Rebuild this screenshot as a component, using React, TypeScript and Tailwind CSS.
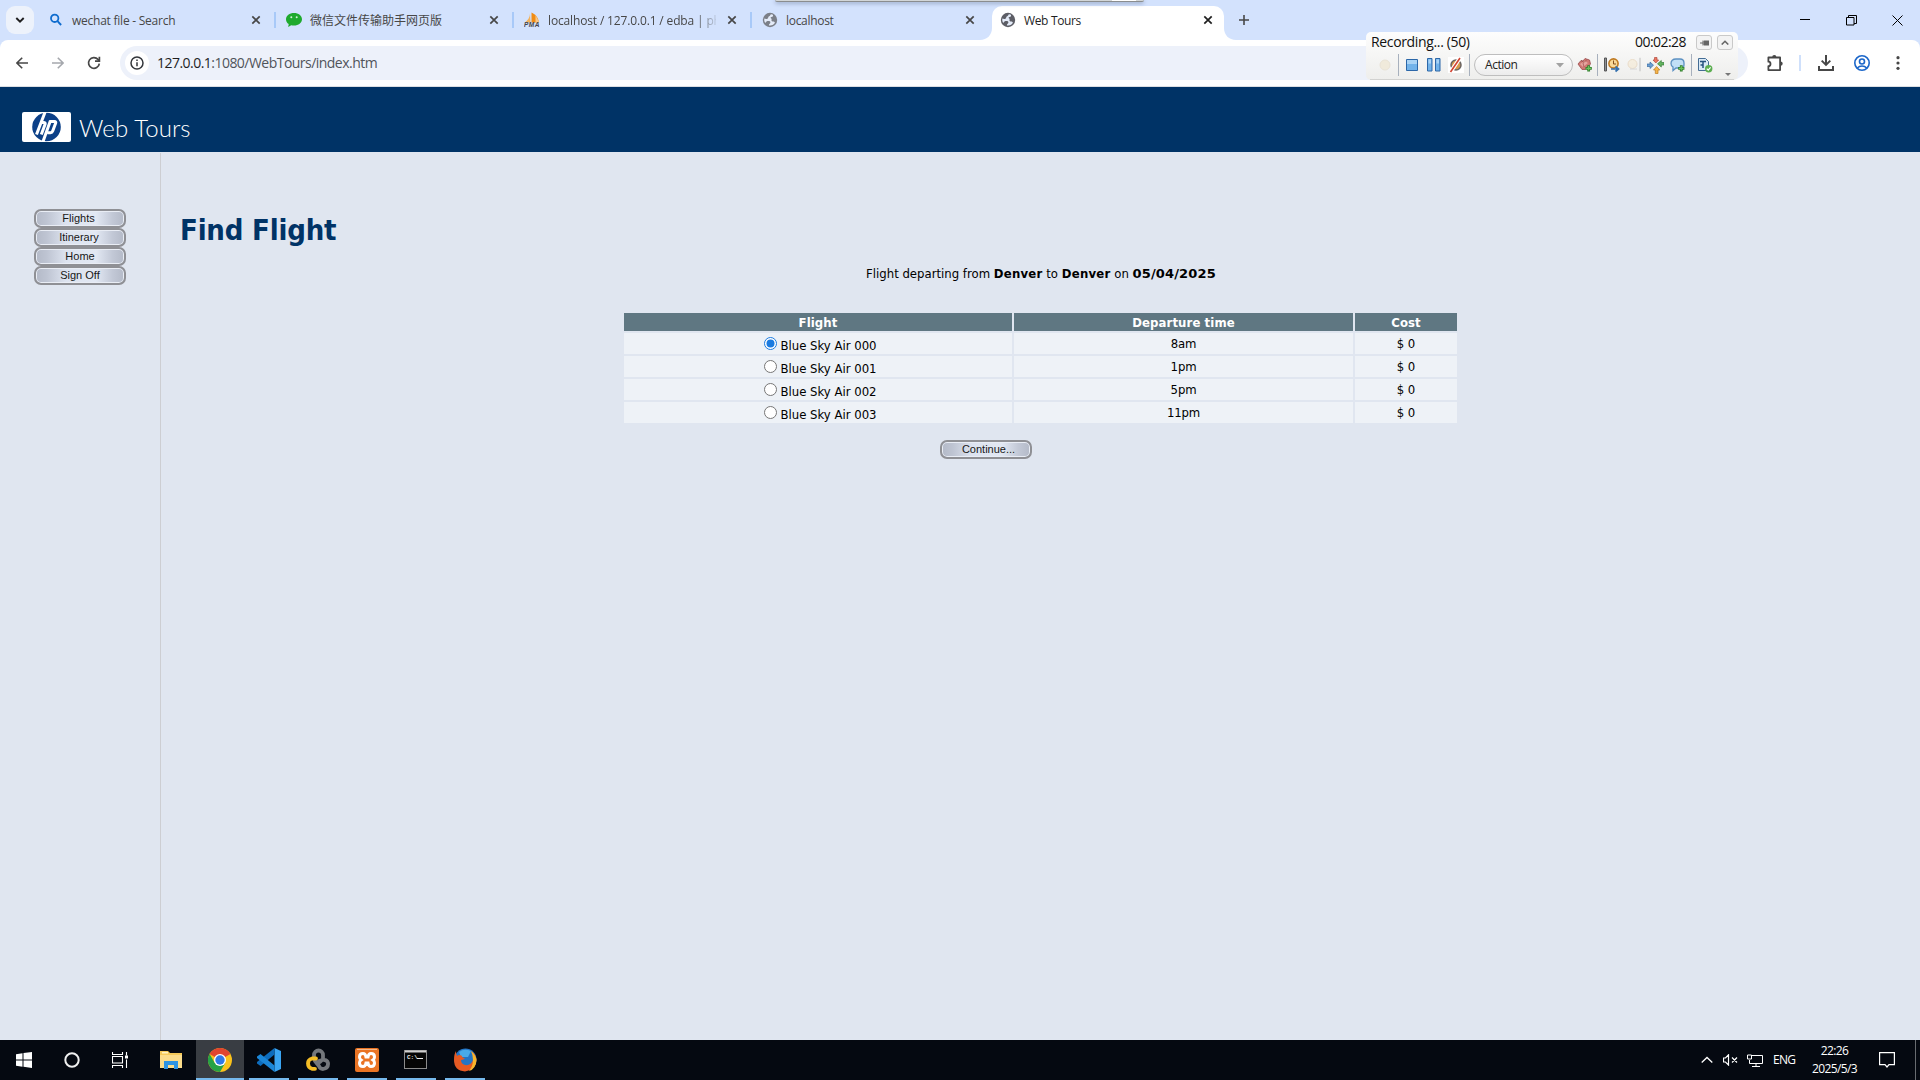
import React from "react";

const ui = "font-['Open_Sans','Noto_Sans_CJK_SC',sans-serif]";

function Close({ className = "text-[#474747]" }: { className?: string }) {
  return (
    <svg width="10" height="10" viewBox="0 0 10 10" className={`shrink-0 ${className}`}>
      <path d="M1.3 1.3 8.7 8.7M8.7 1.3 1.3 8.7" stroke="currentColor" strokeWidth="1.7" fill="none" />
    </svg>
  );
}

function Globe({ color }: { color: string }) {
  return (
    <svg width="16" height="16" viewBox="0 0 16 16">
      <circle cx="8" cy="8" r="7.2" fill={color} />
      <path
        d="M9.4 2.2C7.8 2.4 8.6 3.8 7.2 4.3 5.8 4.8 6.6 6.2 5.4 6.7 4.4 7.1 3.2 6.9 2.4 6.6 2 8.2 2.3 9.6 3.1 10.8 4.4 10.7 4.2 9.2 5.6 9.1 7.2 9 8.5 9.3 8.4 10.6 8.3 11.8 7 11.6 6.9 13.4 9.4 13.9 12 12.8 13 10.6 12.4 9.9 12 9.3 10.8 9.4 9.4 9.5 9.3 8.2 9.6 7.4 10 6.4 8.6 6.7 8.6 5.7 8.6 4.8 10.2 5 10.8 4.4 11.2 3.9 11 3.3 10.9 2.8 10.4 2.4 9.9 2.2 9.4 2.2Z"
        fill="#e4ebf8"
      />
    </svg>
  );
}

function SearchFavicon() {
  return (
    <svg width="16" height="16" viewBox="0 0 16 16">
      <circle cx="6.7" cy="6.3" r="3.7" stroke="#0f6cce" strokeWidth="1.8" fill="none" />
      <path d="M9.5 9.2 13.1 13" stroke="#0f6cce" strokeWidth="1.9" />
    </svg>
  );
}

function WechatFavicon() {
  return (
    <svg width="16" height="16" viewBox="0 0 16 16">
      <path d="M8 1C3.5 1 0 3.6 0 7.2c0 2 1 3.7 2.7 4.9L2.2 15l3-1.7c.9.2 1.800.3 2.800.3 4.5 0 8-2.7 8-6.3S12.5 1 8 1Z" fill="#1faa2e" />
      <circle cx="5.3" cy="5.2" r="1" fill="#d5f3d8" />
      <circle cx="10.7" cy="5.2" r="1" fill="#d5f3d8" />
    </svg>
  );
}

function PmaFavicon() {
  return (
    <svg width="16" height="16" viewBox="0 0 16 16">
      <path d="M6 1.5C6 5 4 8 1 10.5h5.5Z" fill="#f2b25c" />
      <path d="M7.5.5v10H15C14 5 11 2 7.5.5Z" fill="#f08c14" />
      <path d="M11.5 3v7.5h3.8Z" fill="#f7c88a" />
      <text x="0" y="15" fontSize="6.5" fontWeight="bold" fontStyle="italic" fill="#44444a" fontFamily="Liberation Sans, sans-serif" textLength="15.5">PMA</text>
    </svg>
  );
}

type TabProps = { icon: React.ReactNode; title: string; tracking?: string; separator?: boolean; fade?: boolean };

function Tab({ icon, title, tracking = "tracking-[-0.2px]", separator = true, fade = false }: TabProps) {
  return (
    <div className="flex h-10 w-[238px] shrink-0 items-center pl-[10px]">
      <div className="flex w-4 shrink-0 justify-center">{icon}</div>
      <div
        className={`ml-2 mt-[2px] w-[168px] whitespace-nowrap text-[12px] leading-5 text-[#474747] ${tracking} ${
          fade ? "[mask-image:linear-gradient(to_right,black_88%,transparent_102%)]" : ""
        }`}
      >
        {title}
      </div>
      <div className="ml-[11px]">
        <Close />
      </div>
      <div className={`ml-auto h-4 w-[2px] ${separator ? "bg-[#a8c9f8]" : ""}`} />
    </div>
  );
}

function TabStrip() {
  return (
    <div className="flex h-10 shrink-0 items-center bg-[#d3e2fd]">
      <div className="ml-[6px] mr-1 flex size-7 shrink-0 items-center justify-center rounded-[9px] bg-[#edf2fb]">
        <svg width="10" height="8" viewBox="0 0 10 8">
          <path d="M1.3 2 5 5.7 8.7 2" stroke="#1f1f1f" strokeWidth="1.9" fill="none" />
        </svg>
      </div>
      <Tab icon={<SearchFavicon />} title="wechat file - Search" tracking="tracking-[-0.24px]" />
      <Tab icon={<WechatFavicon />} title="微信文件传输助手网页版" tracking="tracking-[0px]" />
      <Tab icon={<PmaFavicon />} title="localhost / 127.0.0.1 / edba | ph" tracking="tracking-[-0.15px]" fade />
      <Tab icon={<Globe color="#7b7f88" />} title="localhost" tracking="tracking-[-0.3px]" separator={false} />
      <div className="flex h-10 w-[246px] shrink-0 items-end">
        <svg width="12" height="12" viewBox="0 0 12 12" className="-ml-[10px] shrink-0">
          <path d="M12 0v12H0C7 12 12 7 12 0Z" fill="white" />
        </svg>
        <div className="flex h-[34px] w-[232px] shrink-0 items-center rounded-t-[10px] bg-white pb-[6px] pl-2">
          <Globe color="#5d5e66" />
          <div className="ml-2 mt-[2px] w-[168px] text-[12px] leading-5 tracking-[-0.35px] text-[#1f1f1f]">Web Tours</div>
          <div className="ml-[11px]">
            <Close className="text-[#1f1f1f]" />
          </div>
        </div>
        <svg width="12" height="12" viewBox="0 0 12 12" className="shrink-0">
          <path d="M0 0v12H12C5 12 0 7 0 0Z" fill="white" />
        </svg>
      </div>
      <svg width="12" height="12" viewBox="0 0 12 12" className="ml-[2px]">
        <path d="M6 1v10M1 6h10" stroke="#474747" strokeWidth="1.6" />
      </svg>
      <div className="ml-auto flex items-center gap-9 pr-[17px] text-black">
        <svg width="10" height="12" viewBox="0 0 10 12"><path d="M0 5.5h10" stroke="currentColor" /></svg>
        <svg width="11" height="11" viewBox="0 0 11 11" fill="none" stroke="currentColor">
          <path d="M.5 2.5h7.5v7.5H.5ZM2.5 2.5V.5h8v8H8" />
        </svg>
        <svg width="11" height="11" viewBox="0 0 11 11" className="-ml-px"><path d="m.5.5 10 10m0-10-10 10" stroke="currentColor" /></svg>
      </div>
    </div>
  );
}

function AddressBar() {
  return (
    <div className="flex h-[47px] shrink-0 items-center bg-[#d3e2fd]">
      <div className="flex h-[47px] w-full items-center rounded-t-[8px] border-b border-[#dcdfe3] bg-white pb-[1px] pl-[16px] pr-[17px]">
        <svg width="12" height="12" viewBox="0 0 12 12" fill="none" stroke="#474747" strokeWidth="1.6">
          <path d="M12 6H1M6.2.7.9 6l5.3 5.3" />
        </svg>
        <svg width="12" height="12" viewBox="0 0 12 12" fill="none" stroke="#a5a8ad" strokeWidth="1.6" className="ml-6">
          <path d="M0 6h11M5.8.7 11.1 6l-5.3 5.3" />
        </svg>
        <svg width="14" height="14" viewBox="0 0 14 14" fill="none" stroke="#474747" strokeWidth="1.7" className="ml-[23px]">
          <path d="M12.3 7.6A5.4 5.4 0 1 1 11 3.4l1.3 1.4" />
          <path d="M12.4.7v4.5H8" />
        </svg>
        <div className="ml-[19px] flex h-[34px] w-[1628px] shrink-0 items-center rounded-full bg-[#edf1fa] pl-[5px]">
          <div className="flex size-6 shrink-0 items-center justify-center rounded-full bg-white">
            <svg width="14" height="14" viewBox="0 0 14 14" fill="none" stroke="#33363b" strokeWidth="1.5">
              <circle cx="7" cy="7" r="6" />
              <path d="M7 6.2V10.2M7 3.6v1.5" />
            </svg>
          </div>
          <div className="ml-[8px] whitespace-nowrap text-[14px] leading-5 tracking-[-0.53px] text-[#50545a]">
            <span className="text-[#1f1f1f]">127.0.0.1</span>:1080/WebTours/index.htm
          </div>
        </div>
        <svg width="18" height="18" viewBox="0 0 18 18" fill="none" stroke="#474747" strokeWidth="1.8" strokeLinejoin="round" className="ml-[18px] shrink-0">
          <path d="M2.4 3.5h11.7v12.6H2.4v-4c1.3 0 2.1-.9 2.1-2.2 0-1.3-.8-2.2-2.1-2.2Z" />
          <path d="M6.2 3.2a2.1 2.1 0 0 1 4.2 0ZM14.5 7.4a2.1 2.1 0 0 1 0 4.4Z" fill="#474747" stroke="none" />
        </svg>
        <div className="ml-[15px] h-4 w-[2px] shrink-0 bg-[#cfe0fb]" />
        <svg width="16" height="16" viewBox="0 0 16 16" fill="none" stroke="#474747" strokeWidth="2" className="ml-[17px] shrink-0">
          <path d="M8 0v9.5M3.7 5.6 8 9.9l4.3-4.3M1 11v4h14v-4" />
        </svg>
        <svg width="16" height="16" viewBox="0 0 16 16" fill="none" stroke="#1b66c9" strokeWidth="1.6" className="ml-5 shrink-0">
          <circle cx="8" cy="8" r="7.2" />
          <circle cx="8" cy="6.5" r="2.5" />
          <path d="M3.3 13c2.5-2.6 6.9-2.6 9.4 0" />
        </svg>
        <svg width="4" height="14" viewBox="0 0 4 14" fill="#474747" className="ml-auto mr-[3px] shrink-0">
          <circle cx="2" cy="1.7" r="1.6" /><circle cx="2" cy="7" r="1.6" /><circle cx="2" cy="12.3" r="1.6" />
        </svg>
      </div>
    </div>
  );
}

function Plus({ x, y }: { x: number; y: number }) {
  return (
    <g>
      <path d={`M${x} ${y - 4}v8M${x - 4} ${y}h8`} stroke="#2f7d2b" strokeWidth="3.6" />
      <path d={`M${x} ${y - 3}v6M${x - 3} ${y}h6`} stroke="#6cc35c" strokeWidth="1.6" />
    </g>
  );
}

function Divider({ className }: { className: string }) {
  return <div className={`h-[22px] w-px shrink-0 bg-[#a7b0bd] ${className}`} />;
}

/* Floating recorder toolbar that hovers over the browser window. */
function Recorder() {
  return (
    <div className="absolute left-[1366px] top-[32px] h-12 w-[372px] rounded-[5px] bg-linear-to-b from-[#fdfdfd] to-[#eeeeec]">
      <div className="flex h-[19px] items-center pl-[5px] pr-[5px] text-[14px] text-[#111]">
        <span className="tracking-[-0.35px]">Recording... (50)</span>
        <span className="ml-auto tracking-[-0.55px]">00:02:28</span>
        <div className="ml-[10px] mt-[2px] flex h-[15px] w-4 items-center justify-center rounded-[3px] border border-[#c9c9c9] bg-[#f3f3f3]">
          <svg width="9" height="6" viewBox="0 0 9 6"><path d="M0 3h3M3 .5v5M4 1h5v4H4Z" fill="#666" stroke="#666" /></svg>
        </div>
        <div className="ml-[5px] mt-[2px] flex h-[15px] w-4 items-center justify-center rounded-[3px] border border-[#c9c9c9] bg-[#f3f3f3]">
          <svg width="8" height="5" viewBox="0 0 8 5"><path d="M.7 4.5 4 1.3l3.3 3.2" fill="none" stroke="#666" strokeWidth="1.6" /></svg>
        </div>
      </div>
      <div className="ml-1 flex h-[29px] w-[364px] items-center border-b border-[#d2d2d0] pb-px pt-px">
        <svg width="14" height="14" viewBox="0 0 14 14" className="ml-2"><circle cx="7" cy="7" r="5" fill="#f0eadb" stroke="#e9e3d6" /></svg>
        <Divider className="ml-[6px]" />
        <svg width="12" height="12" viewBox="0 0 12 12" className="ml-[7px]">
          <path d="M.5.5h11v11H.5Z" fill="#72b3ea" stroke="#2c67a8" /><path d="M1 1h10v4H1Z" fill="#a9d3f5" />
        </svg>
        <svg width="14" height="14" viewBox="0 0 14 14" className="ml-[9px]" fill="#72b3ea" stroke="#2c67a8">
          <path d="M.5.5h4.5v12.5H.5ZM8.5.5h4.5v12.5H8.5Z" /><path d="M1.5 1.5h2.5v4H1.5ZM9.5 1.5h2.5v4H9.5Z" fill="#a9d3f5" stroke="none" />
        </svg>
        <svg width="16" height="16" viewBox="0 0 16 16" className="ml-[7px]">
          <rect width="16" height="16" fill="#fff" />
          <circle cx="8" cy="8" r="5" fill="#d7984a" stroke="#6a6461" strokeWidth="1.5" />
          <path d="m2.5 15 9.5-14" stroke="#fff" strokeWidth="4" /><path d="m2.5 15 9.5-14" stroke="#d2412e" strokeWidth="1.6" />
        </svg>
        <Divider className="ml-[5px]" />
        <div className="ml-[4px] flex h-[22px] w-[99px] shrink-0 items-center rounded-full border border-[#bebebe] bg-linear-to-b from-white to-[#ececec] pl-[10px] pr-2 text-[12px] text-[#222]">
          <span className="tracking-[-0.45px]">Action</span>
          <svg width="8" height="5" viewBox="0 0 8 5" className="ml-auto"><path d="M0 0h8L4 4.5Z" fill="#a2a2a2" /></svg>
        </div>
        <svg width="16" height="16" viewBox="0 0 16 16" className="ml-[4px] shrink-0">
          <path d="m1 7 3-3.5 2 .5 2-2.5 4.5 1.5 1 4-5 5.5L5 12.5Z" fill="#cf7773" stroke="#994d4c" strokeWidth=".8" /><path d="m3 7 5-3 3 2-5 4Z" fill="#e6a49e" /><path d="m4 3.5 3 2 3-3M6 6l1 4" stroke="#994d4c" strokeWidth=".7" fill="none" />
          <g transform="translate(2.7 2.7) scale(.78)"><Plus x={11.5} y={11} /></g>
        </svg>
        <Divider className="ml-[4px]" />
        <svg width="16" height="16" viewBox="0 0 16 16" className="ml-[6px] shrink-0">
          <path d="M.5 1h2v13h-2Z" fill="#8d9095" stroke="#555" /><circle cx="9.5" cy="6.5" r="4.6" fill="#f9d998" stroke="#bf7a21" strokeWidth="1.6" />
          <path d="M9.5 3.5v3.5h2.5" stroke="#814e1d" fill="none" /><path d="M7 12h7m-2.5-2.5 3 2.5-3 2.5" stroke="#3470ae" strokeWidth="1.7" fill="none" />
        </svg>
        <svg width="16" height="16" viewBox="0 0 16 16" className="ml-[6px] shrink-0 opacity-20">
          <circle cx="6.5" cy="7" r="4.5" fill="#f9d998" stroke="#bf7a21" /><path d="M4 12h7M13.5 1h1v13h-1Z" stroke="#777" fill="none" />
        </svg>
        <svg width="17" height="17" viewBox="0 0 17 17" className="ml-[5px] shrink-0">
          <path d="M0 7h3V5L6.5 8.2 3 11.5V9.5H0Z" fill="#6a9fd4" stroke="#3c6da1" strokeWidth=".7" />
          <path d="M7.5.5h2.5v2.5h1.7L8.8 6 6 3h1.5Z" fill="#ec7561" stroke="#b04c3d" strokeWidth=".7" />
          <path d="M17 5.5h-2.7V3.5L10.5 6.8l3.8 3.2V8H17Z" fill="#62b45f" stroke="#397d39" strokeWidth=".7" />
          <path d="M8.3 16.5h2.7V13h1.8L9.6 9.5 6.5 13h1.8Z" fill="#f6b44a" stroke="#bf7c1b" strokeWidth=".7" />
        </svg>
        <svg width="16" height="16" viewBox="0 0 16 16" className="ml-[6px] shrink-0">
          <path d="M6 2h4q4 0 4 4v2q0 3-3 3H6l-3 2.5V10Q1 9 1 6.5 1 2 6 2Z" fill="#c1dff6" stroke="#5c91c2" strokeWidth="1.3" />
          <g transform="translate(2.7 2.7) scale(.78)"><Plus x={11} y={11} /></g>
        </svg>
        <Divider className="ml-[5px]" />
        <svg width="16" height="16" viewBox="0 0 16 16" className="ml-[5px] shrink-0">
          <path d="M1.5 1.5h7l3 3v9h-10Z" fill="#d9e9f6" stroke="#446d95" /><path d="M3 4.5h6M6 4.5v6.5M3.5 8h2" stroke="#25517e" strokeWidth="1.5" />
          <circle cx="11.7" cy="11.7" r="3.7" fill="#5cae50" /><path d="m9.8 11.7 1.4 1.4 2.4-2.8" stroke="#fff" fill="none" strokeWidth="1.2" />
        </svg>
        <svg width="6" height="4" viewBox="0 0 6 4" className="ml-[12px] mt-[20px] shrink-0"><path d="M0 0h6L3 3Z" fill="#777" /></svg>
      </div>
    </div>
  );
}

function PillButton({ label, className }: { label: string; className: string }) {
  return (
    <button
      type="button"
      className="block h-[19px] w-[92px] shrink-0 rounded-[7px] border-2 border-[#8f9095] bg-[linear-gradient(to_right,#b4bac8,#bec4d2_12%,#dde3ef_34%,#e2e8f3_68%,#c2c8d6_87%,#b4bac8)] text-center font-['Liberation_Sans',Arial,sans-serif] text-[11px] leading-[13px] text-[#171717] shadow-[inset_0_0_0_1px_#e9edf5]"
    >
      <span className={`block ${className}`}>{label}</span>
    </button>
  );
}

const flights = [
  { name: "Blue Sky Air 000", time: "8am" },
  { name: "Blue Sky Air 001", time: "1pm" },
  { name: "Blue Sky Air 002", time: "5pm" },
  { name: "Blue Sky Air 003", time: "11pm" },
];

function Radio({ checked }: { checked: boolean }) {
  return (
    <svg width="13" height="13" viewBox="0 0 13 13" className="mr-[3px] shrink-0">
      <circle cx="6.5" cy="6.5" r="6" fill="#fff" stroke={checked ? "#1a7be0" : "#767676"} />
      {checked && <circle cx="6.5" cy="6.5" r="4" fill="#1a7be0" />}
    </svg>
  );
}

function FindFlight() {
  return (
    <main className="flex-1 pl-[19px] font-['DejaVu_Sans_Condensed','DejaVu_Sans',sans-serif] text-[13px] text-black">
      <h1 className="mt-[59px] whitespace-nowrap text-[29px] font-bold leading-[38px] tracking-[-0.2px] text-[#003366]">Find Flight</h1>
      <div className="ml-[444px] mt-[15px] flex w-[833px] flex-col items-center">
        <p className="whitespace-nowrap pl-px leading-[20px]">
          Flight departing from <b className="tracking-[0.25px]">Denver</b> to <b className="tracking-[0.25px]">Denver</b> on{" "}
          <b className="font-['DejaVu_Sans',sans-serif] tracking-[0.15px]">05/04/2025</b>
        </p>
        <div className="mt-[29px] grid grid-cols-[388px_339px_102px] gap-[2px] text-center">
          {["Flight", "Departure time", "Cost"].map((label) => (
            <div key={label} className="h-[18px] bg-[#5f7782] font-bold leading-[19px] text-white tracking-[0.1px]">{label}</div>
          ))}
          {flights.map(({ name, time }, i) => (
            <React.Fragment key={name}>
              <div className="flex h-[21px] items-start justify-center bg-[#eef2f7] pt-1 pl-[5px]">
                <Radio checked={i === 0} />
                <span className="mt-[1px] leading-[16px]">{name}</span>
              </div>
              <div className="h-[21px] bg-[#eef2f7] leading-[22px] tracking-[-0.15px]">{time}</div>
              <div className="h-[21px] bg-[#eef2f7] leading-[22px]">$ 0</div>
            </React.Fragment>
          ))}
        </div>
        <div className="mr-[110px] mt-[17px]">
          <PillButton label="Continue..." className="pl-[6px]" />
        </div>
      </div>
    </main>
  );
}

function SiteHeader() {
  return (
    <header className="flex h-[65px] shrink-0 bg-[#003366] pl-[22px] pt-[25px]">
      <svg width="49" height="30" viewBox="0 0 49 30" className="shrink-0">
        <rect width="49" height="30" rx="2" fill="#fff" />
        <circle cx="24.5" cy="15" r="14.3" fill="#0c4088" />
        <g fill="none" stroke="#fff" strokeWidth="3">
          <path d="M23.5-1 14.5 22.5M18.5 10.5h3q2.2 0 1.5 2L19.3 22.5" />
          <path d="M28.5 8.5 20.5 31M28 9.5h4.5q1.7 0 1.1 1.8l-2.9 7.8q-.6 1.6-2.2 1.6H25.5" />
        </g>
      </svg>
      <div className="ml-[8px] whitespace-nowrap font-['Lato',sans-serif] text-[24px] font-light leading-[32px] tracking-[0.1px] text-white">Web Tours</div>
    </header>
  );
}

function TaskIcon({ children, state = "idle" }: { children: React.ReactNode; state?: "idle" | "open" | "active" }) {
  return (
    <div className={`flex h-10 shrink-0 items-center justify-center ${state === "active" ? "w-12 bg-[#393d43]" : "mx-[4px] w-10"} ${state === "idle" ? "" : "border-b-2 border-[#76b9ed] pt-[2px]"}`}>
      {children}
    </div>
  );
}

function Taskbar() {
  return (
    <footer className="flex h-10 shrink-0 items-center bg-[#050911] text-white">
      <TaskIcon>
        <svg width="16" height="16" viewBox="0 0 16 16" fill="#fff"><path d="M0 2.2 6.5 1.3V7.5H0ZM7.5 1.1 16 0v7.5H7.5ZM0 8.5h6.5v6.2L0 13.8ZM7.5 8.5H16V16l-8.5-1.2Z" /></svg>
      </TaskIcon>
      <TaskIcon>
        <svg width="16" height="16" viewBox="0 0 16 16"><circle cx="8" cy="8" r="6.7" fill="none" stroke="#f0f0f0" strokeWidth="2" /></svg>
      </TaskIcon>
      <TaskIcon>
        <svg width="16" height="16" viewBox="0 0 16 16" fill="none" stroke="#fff" strokeWidth="1.1"><path d="M.5 0v2.5h10V0M.5 4.5h10v6.5H.5ZM.5 16v-2.5h10V16M14.5 0v3.5M14.5 7.5V16" /><path d="M13 3.5h3v3h-3Z" fill="#fff" stroke="none" /></svg>
      </TaskIcon>
      <div className="w-[3px]" />
      <TaskIcon>
        <svg width="22" height="20" viewBox="0 0 22 20"><path d="M0 1h8l2 2h12v15H0Z" fill="#f5c95a" /><path d="M2 2h6v1.5H2Z" fill="#fff2c0" /><path d="M0 5h22v13H0Z" fill="#fbdc8b" /><path d="M4 11h14v8h-4v-4H8v4H4Z" fill="#2e93e2" /></svg>
      </TaskIcon>
      <div className="w-px" />
      <TaskIcon state="active">
        <svg width="24" height="24" viewBox="0 0 24 24">
          <circle cx="12" cy="12" r="12" fill="#fbc21b" />
          <path d="M12 12 1.6 6a12 12 0 0 1 20.8 0Z" fill="#e0452f" />
          <path d="M1.6 6A12 12 0 0 0 12 24l5.2-9L12 12 6.8 15Z" fill="#26a245" />
          <circle cx="12" cy="12" r="6" fill="#fff" /><circle cx="12" cy="12" r="4.7" fill="#3079e5" />
        </svg>
      </TaskIcon>
      <div className="w-px" />
      <TaskIcon state="open">
        <svg width="24" height="24" viewBox="0 0 24 24">
          <path d="M17.5 0v24L24 21V3Z" fill="#3aa5f3" />
          <path d="M17.5 0v6.5L3.5 18 0 15.5V14Z" fill="#0d6cbd" />
          <path d="M17.5 24v-6.5L3.5 6 0 8.5V10Z" fill="#1b86d8" />
        </svg>
      </TaskIcon>
      <div className="w-px" />
      <TaskIcon state="open">
        <svg width="24" height="24" viewBox="0 0 24 24" fill="none" strokeWidth="3.8" strokeLinecap="round">
          <path d="M8 8.5V7a4.5 4.5 0 0 1 9 0v4l-3 3M13 13l3-1q5-1 6 3 .5 5-5 6-3 0-4-3L9 13" stroke="#74777c" />
          <path d="M10 10.5H6q-4 1-4 5 0 4 4 5.3H9" stroke="#f5bd26" />
        </svg>
      </TaskIcon>
      <div className="w-px" />
      <TaskIcon state="open">
        <svg width="24" height="24" viewBox="0 0 24 24">
          <rect width="24" height="24" rx="2" fill="#ea7424" /><path d="M2 1.5h20" stroke="#f5b88a" />
          <path d="M8 5.5q2.5 0 3 3.5h2q.5-3.5 3-3.5 3.5 0 3.5 3.5 0 2-1.5 3 1.5 1 1.5 3 0 3.5-3.5 3.5-2.5 0-3-3.5h-2q-.5 3.5-3 3.5-3.5 0-3.5-3.5 0-2 1.5-3-1.5-1-1.5-3 0-3.5 3.5-3.5Z" fill="none" stroke="#fff" strokeWidth="3" />
        </svg>
      </TaskIcon>
      <div className="w-px" />
      <TaskIcon state="open">
        <svg width="24" height="20" viewBox="0 0 24 20">
          <rect x=".5" y=".5" width="22" height="18" fill="#050505" stroke="#8b8b8b" /><path d="M1 1.5h21" stroke="#d0d0d0" strokeWidth="2" />
          <text x="3" y="9" fill="#eee" fontSize="6" fontWeight="bold" fontFamily="Liberation Mono, monospace">C:\</text><path d="M13 8.5h6" stroke="#eee" />
        </svg>
      </TaskIcon>
      <div className="w-px" />
      <TaskIcon state="open">
        <svg width="24" height="24" viewBox="0 0 24 24">
          <circle cx="12.5" cy="11.5" r="11" fill="#2475c5" /><path d="M6 4q5-4 12-1l-3 6H8Z" fill="#48aae9" />
          <path d="M3 3q0 3 1 5 2-2 5 0 0 2 3 2-1 2-4 2 0 4 4 5 6 1 8-5 1-5-2-9 5 3 5.5 9Q23 22 12 23.5 1 22.5 1 12 1 6 3 3Z" fill="#e65a23" />
          <path d="M18 3q5 4 5.5 9-.5 9-7.5 11 4-5 4-11 0-5-2-9Z" fill="#f8b52c" />
        </svg>
      </TaskIcon>
      <div className="ml-auto flex items-center">
        <svg width="12" height="8" viewBox="0 0 12 8"><path d="m.7 6.5 5.3-5 5.3 5" fill="none" stroke="#fff" strokeWidth="1.3" /></svg>
        <svg width="15" height="12" viewBox="0 0 15 12" fill="none" stroke="#fff" className="ml-[10px]"><path d="M.5 4v4H2.5L5.5 11V.8L2.5 4ZM9 3.5l5 5M14 3.5l-5 5" strokeWidth="1.2" /></svg>
        <svg width="16" height="14" viewBox="0 0 16 14" fill="none" stroke="#fff" className="ml-[9px] mt-px"><path d="M5 1.5h10.5v8H2.5V6M.5 1h4v4h-4ZM9 9.5v3M5 12.5h8" /></svg>
        <span className="ml-[10px] w-6 text-[12px] leading-5 tracking-[-0.75px]">ENG</span>
        <div className="ml-[14px] w-[47px] whitespace-nowrap text-center text-[12px] leading-[18px] tracking-[-0.6px]">
          <div>22:26</div>
          <div>2025/5/3</div>
        </div>
        <svg width="16" height="17" viewBox="0 0 16 17" fill="none" stroke="#fff" strokeWidth="1.2" className="ml-[21px] mt-[1px]"><path d="M.6.6h14.8v12H10L8 15l-2-2.4H.6Z" /></svg>
        <div className="ml-[20px] mr-1 h-10 w-px bg-[#686b70]" />
      </div>
    </footer>
  );
}

export default function App() {
  return (
    <div className={`relative flex h-[1080px] w-[1920px] flex-col overflow-hidden bg-[#e0e6f0] ${ui}`}>
      <TabStrip />
      <AddressBar />
      <SiteHeader />
      <div className="flex flex-1">
        <nav className="mt-px flex w-[161px] shrink-0 flex-col border-r border-[#cdced2] pl-[34px] pt-[56px]">
          <PillButton label="Flights" className="pr-[3px]" />
          <PillButton label="Itinerary" className="pr-[2px]" />
          <PillButton label="Home" className="" />
          <PillButton label="Sign Off" className="" />
        </nav>
        <FindFlight />
      </div>
      <Taskbar />
      <div className="absolute left-[775px] top-0 flex h-[2px] w-[369px] justify-end rounded-b-[4px] border-b border-[#8a8d8f] bg-[#d2d6d8] shadow-[0_1px_4px_#7385a5]">
        <div className="mr-2 h-px w-[24px] bg-white" />
      </div>
      <Recorder />
    </div>
  );
}
